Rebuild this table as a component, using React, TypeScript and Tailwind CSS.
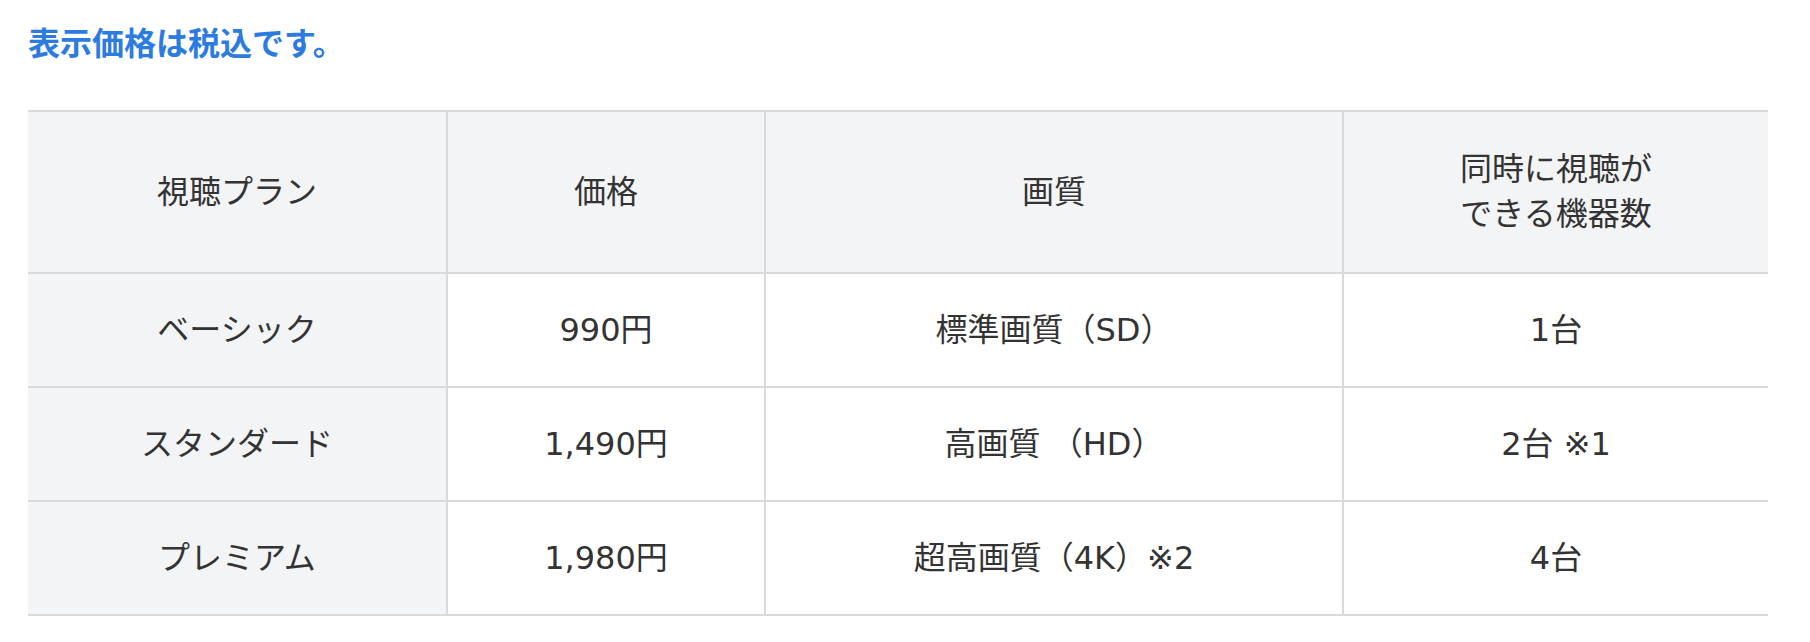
const header = ["視聴プラン", "価格", "画質", "同時に視聴が\nできる機器数"];

const rows = [
  ["ベーシック", "990円", "標準画質（SD）", "1台"],
  ["スタンダード", "1,490円", "高画質 （HD）", "2台 ※1"],
  ["プレミアム", "1,980円", "超高画質（4K）※2", "4台"],
];

function Cell({ text, gray, last }: { text: string; gray: boolean; last: boolean }) {
  return (
    <div
      className={`flex items-center justify-center text-center whitespace-pre-line border-b-2 border-[#dadada] ${
        last ? "" : "border-r-2"
      } ${gray ? "bg-[#f3f4f6]" : "bg-white"}`}
    >
      {text}
    </div>
  );
}

export default function App() {
  return (
    <div
      className="min-h-screen bg-white px-[28px] pt-[25px] text-[#333333]"
      style={{ fontFamily: '"Noto Sans CJK JP", "Noto Sans", sans-serif' }}
    >
      <h2 className="text-[32px] leading-[32px] font-bold text-[#2b7be0]">表示価格は税込です。</h2>

      <div
        className="mt-[53px] w-[1740px] border-t-2 border-[#dadada] text-[32px] leading-[45px] font-normal"
        style={{ fontFamily: '"DejaVu Sans", "Noto Sans CJK JP", sans-serif' }}
      >
        <div className="grid grid-cols-[420px_318px_578px_424px] grid-rows-[162px_114px_114px_114px]">
          {header.map((h, i) => (
            <Cell key={h} text={h} gray last={i === 3} />
          ))}
          {rows.map((r) =>
            r.map((c, i) => <Cell key={r[0] + i} text={c} gray={i === 0} last={i === 3} />)
          )}
        </div>
      </div>
    </div>
  );
}
